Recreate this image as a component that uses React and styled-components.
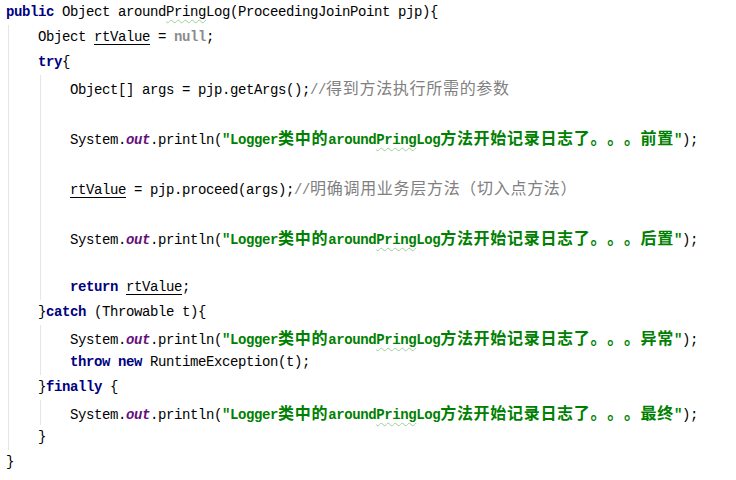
import React from "react";
import styled, { createGlobalStyle } from "styled-components";

const GlobalStyle = createGlobalStyle`
  html, body { margin: 0; padding: 0; background: #ffffff; }
  body { width: 736px; height: 480px; overflow: hidden; }
`;

const Editor = styled.div`
  padding: 0 0 0 6px;
  font-family: "Liberation Mono", "DejaVu Sans Mono", monospace;
  font-size: 14px;
  letter-spacing: -0.4px;
  color: #000000;
  background: #ffffff;
  text-spacing-trim: space-all;
`;

const Line = styled.div`
  height: 25px;
  line-height: 25px;
  white-space: pre;
`;

const Block = styled.div`
  margin-left: 2px;
  padding-left: 29px;
  border-left: 1px solid #e6e6e6;
`;

const Kw = styled.span`
  color: #000080;
  font-weight: bold;
`;

const Muted = styled.span`
  color: #8c8c8c;
  font-weight: bold;
`;

const Str = styled.span`
  color: #008000;
  font-weight: bold;
`;

const Comment = styled.span`
  color: #808080;
`;

const Field = styled.span`
  color: #660e7a;
  font-weight: bold;
  font-style: italic;
`;

const Reassigned = styled.span`
  text-decoration: underline;
  text-decoration-color: #000000;
  text-underline-offset: 3px;
`;

const Typo = styled.span`
  text-decoration: underline wavy #9ccf9c;
  text-decoration-thickness: 1px;
  text-underline-offset: 3px;
`;

const Cjk = styled.span`
  font-family: "Noto Sans CJK SC", "Noto Sans CJK JP", sans-serif;
  font-size: 16px;
  letter-spacing: 0.7px;
  text-spacing-trim: space-all;
  font-feature-settings: "halt" 0, "palt" 0;
  font-weight: ${(p) => (p.$bold ? 700 : 400)};
`;

function Mixed({ text, bold }) {
  const parts = text.split(/([\u3000-\u303f\u4e00-\u9fff\uff00-\uffef]+)/);
  return parts.map((p, i) =>
    i % 2 === 1 ? (
      <Cjk key={i} $bold={bold}>
        {p}
      </Cjk>
    ) : (
      <React.Fragment key={i}>{p}</React.Fragment>
    )
  );
}

function LogLine({ tail }) {
  return (
    <Line>
      System.<Field>out</Field>.println(
      <Str>
        "Logger<Mixed text="类中的" bold />around<Typo>Pring</Typo>Log
        <Mixed text={"方法开始记录日志了。。。" + tail} bold />"
      </Str>
      );
    </Line>
  );
}

export default function App() {
  return (
    <>
      <GlobalStyle />
      <Editor>
        <Line>
          <Kw>public</Kw> Object around<Typo>Pring</Typo>Log(ProceedingJoinPoint pjp){"{"}
        </Line>
        <Block>
          <Line>
            Object <Reassigned>rtValue</Reassigned> = <Muted>null</Muted>;
          </Line>
          <Line>
            <Kw>try</Kw>
            {"{"}
          </Line>
          <Block>
            <Line>
              Object[] args = pjp.getArgs();
              <Comment>
                //<Mixed text="得到方法执行所需的参数" />
              </Comment>
            </Line>
            <Line />
            <LogLine tail="前置" />
            <Line />
            <Line>
              <Reassigned>rtValue</Reassigned> = pjp.proceed(args);
              <Comment>
                //<Mixed text="明确调用业务层方法（切入点方法）" />
              </Comment>
            </Line>
            <Line />
            <LogLine tail="后置" />
            <Line />
            <Line>
              <Kw>return</Kw> <Reassigned>rtValue</Reassigned>;
            </Line>
          </Block>
          <Line>
            {"}"}
            <Kw>catch</Kw> (Throwable t){"{"}
          </Line>
          <Block>
            <LogLine tail="异常" />
            <Line>
              <Kw>throw</Kw> <Kw>new</Kw> RuntimeException(t);
            </Line>
          </Block>
          <Line>
            {"}"}
            <Kw>finally</Kw> {"{"}
          </Line>
          <Block>
            <LogLine tail="最终" />
          </Block>
          <Line>{"}"}</Line>
        </Block>
        <Line>{"}"}</Line>
      </Editor>
    </>
  );
}
